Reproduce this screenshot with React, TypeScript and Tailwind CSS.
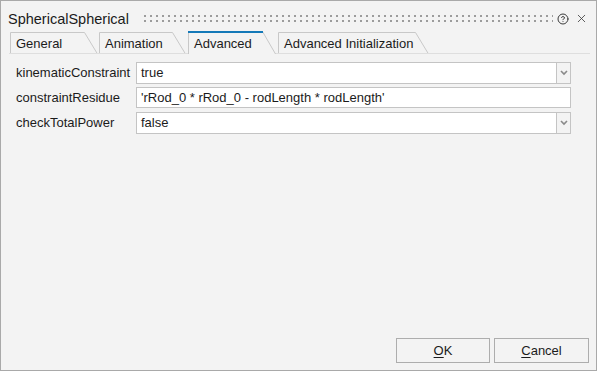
import { CircleHelp, X } from "lucide-react";

const tabs = [
  { label: "General", w: 88, gap: 9 },
  { label: "Animation", w: 87, gap: 1 },
  { label: "Advanced", w: 88, gap: 2, active: true },
  { label: "Advanced Initialization", w: 151, gap: 2 },
];

const Tab = ({ label, w, gap, active }: { label: string; w: number; gap: number; active?: boolean }) => {
  const h = active ? 23 : 22;
  return (
    <div className={`relative ${active ? "z-10" : ""}`} style={{ width: w, height: h, marginLeft: gap }}>
      <svg className="absolute inset-0" width={w} height={h}>
        <path
          d={`M0.5,${h} V0.5 H${w - 13.5} L${w - 0.5},${h}`}
          fill="#f3f3f3"
          stroke="#c8c8c8"
          strokeWidth="1"
        />
        {active && <line x1="0" y1="1" x2={w - 13} y2="1" stroke="#1479b8" strokeWidth="2" />}
      </svg>
      <span className={`relative block pl-[6px] pt-[1px] text-[13px] leading-[22px] ${active ? "pt-[2px]" : ""}`}>
        {label}
      </span>
    </div>
  );
};

const Chevron = () => (
  <svg width="8" height="6" viewBox="0 0 8 6">
    <path d="M1 1 L4 4 L7 1" fill="none" stroke="#8a8a8a" strokeWidth="1.6" />
  </svg>
);

const Row = ({ label, value, dropdown }: { label: string; value: string; dropdown?: boolean }) => (
  <div className="flex items-center">
    <div className="w-[135px] shrink-0 pl-[15px] text-[13px] whitespace-nowrap">{label}</div>
    <div className={`flex flex-1 ${dropdown ? "h-[22px]" : "h-[21px]"}`}>
      <div
        className={`flex flex-1 items-center border border-[#c4c4c4] bg-white pl-[4px] text-[13px] ${
          dropdown ? "border-r-0" : ""
        }`}
      >
        {value}
      </div>
      {dropdown && (
        <div className="flex w-[15px] items-center justify-center border border-[#c4c4c4] bg-[#f3f3f3]">
          <Chevron />
        </div>
      )}
    </div>
  </div>
);

export default function App() {
  return (
    <div
      className="flex h-[371px] w-[597px] flex-col border border-[#a9a9a9] bg-[#f3f3f3] text-[#1b1b1b]"
      style={{ fontFamily: '"Liberation Sans", Arial, sans-serif' }}
    >
      {/* title bar */}
      <div className="flex h-[29px] items-center pl-[7px] pr-[8px] pt-[6px]">
        <span className="text-[14.5px] leading-[18px]">SphericalSpherical</span>
        <svg className="ml-[15px] flex-1" height="8">
          <defs>
            <pattern id="grip" width="6" height="5" patternUnits="userSpaceOnUse">
              <rect x="0" y="0" width="2" height="2" fill="#9c9c9c" />
            </pattern>
          </defs>
          <rect x="0" y="0" width="100%" height="7" fill="url(#grip)" />
        </svg>
        <CircleHelp className="ml-[4px]" size={12} strokeWidth={2} color="#3a3a3a" />
        <X className="ml-[6px]" size={13} strokeWidth={1.5} color="#3a3a3a" />
      </div>

      {/* tabs */}
      <div className="relative mt-[1px] flex items-end">
        {tabs.map((t) => (
          <Tab key={t.label} {...t} />
        ))}
        <div className="absolute bottom-0 left-[8px] right-[6px] h-px bg-[#dedede]" />
      </div>

      {/* properties */}
      <div className="mt-[8px] flex flex-col pr-[25px]">
        <Row label="kinematicConstraint" value="true" dropdown />
        <div className="mt-[3px]">
          <Row label="constraintResidue" value="'rRod_0 * rRod_0 - rodLength * rodLength'" />
        </div>
        <div className="mt-[4px]">
          <Row label="checkTotalPower" value="false" dropdown />
        </div>
      </div>

      <div className="flex-1" />

      {/* buttons */}
      <div className="flex justify-end gap-[4px] pb-[7px] pr-[7px]">
        <button className="h-[25px] w-[94px] border border-[#adadad] bg-[#f3f3f3] text-[13px]">
          <span className="underline underline-offset-2">O</span>K
        </button>
        <button className="h-[25px] w-[95px] border border-[#adadad] bg-[#f3f3f3] text-[13px]">
          <span className="underline underline-offset-2">C</span>ancel
        </button>
      </div>
    </div>
  );
}
